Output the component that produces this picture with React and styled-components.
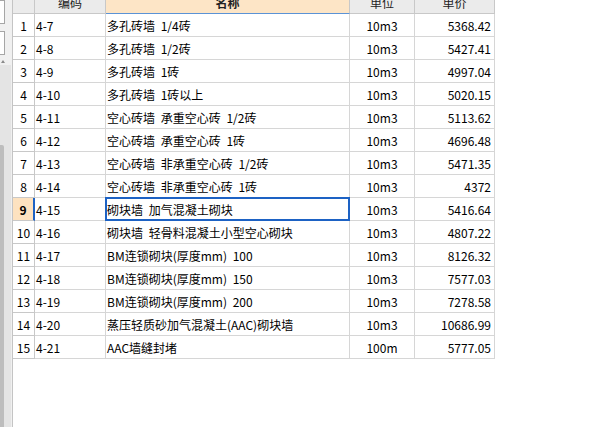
import React from "react";
import styled, { createGlobalStyle } from "styled-components";

const Global = createGlobalStyle`
  html, body { margin: 0; padding: 0; background: #fff; overflow: hidden; }
  body { font-family: "Noto Sans CJK SC", "Liberation Sans", sans-serif; font-size: 12px; color: #000; }
`;

const Page = styled.div`
  display: flex;
  width: 612px;
  height: 427px;
  overflow: hidden;
`;

const LeftPanel = styled.div`
  width: 12px;
  flex: none;
  background: #f0f0f0;
  display: flex;
  flex-direction: column;
  overflow: hidden;
`;

const StubBox = styled.div`
  width: 5px;
  height: 24px;
  background: #fff;
  border: 1px solid #a6a6a6;
  border-left: none;
  margin-top: ${(p) => p.$top}px;
  box-sizing: border-box;
`;

const Arrow = styled.div`
  margin: 5px 0 0 1px;
  width: 0;
  height: 0;
  border-left: 2px solid transparent;
  border-right: 2px solid transparent;
  border-bottom: 3px solid #8a8a8a;
`;

const Track = styled.div`
  flex: 1;
  margin-top: 2px;
  width: 11px;
  background: #e4e4e4;
  display: flex;
  flex-direction: column;
`;

const Thumb = styled.div`
  margin-top: 80px;
  width: 4px;
  flex: 1;
  background: #bdbdbd;
  border-radius: 0 2px 0 0;
`;

const GridArea = styled.div`
  flex: 1;
  border-left: 1px solid #c4c4c4;
  background: #fff;
  overflow: hidden;
`;

const Grid = styled.div`
  display: grid;
  grid-template-columns: 22px 71px 244px 65px 80px;
  grid-auto-rows: 23px;
  width: max-content;
  margin-top: -9px;
`;

const HeadCell = styled.div`
  box-sizing: border-box;
  background: ${(p) => (p.$active ? "#fde5c6" : "#ebebeb")};
  border-right: 1px solid #c8c8c8;
  border-bottom: 1px solid ${(p) => (p.$active ? "#5b93d6" : "#c8c8c8")};
  display: flex;
  align-items: center;
  justify-content: center;
  font-weight: ${(p) => (p.$active ? 700 : 400)};
  color: #222;
`;

const Cell = styled.div`
  box-sizing: border-box;
  position: relative;
  border-right: 1px solid #d6d6d6;
  border-bottom: 1px solid #d6d6d6;
  display: flex;
  align-items: center;
  white-space: pre;
  word-spacing: 3px;
  justify-content: ${(p) =>
    p.$align === "center" ? "center" : p.$align === "right" ? "flex-end" : "flex-start"};
  padding: ${(p) => (p.$align === "right" ? "0 3px 0 0" : p.$align === "center" ? "0" : "0 0 0 1px")};
`;

const NumCell = styled(Cell)`
  border-right: ${(p) => (p.$sel ? "2px solid #1d62c4" : "1px solid #c8c8c8")};
  border-bottom-color: #c8c8c8;
  background: ${(p) => (p.$sel ? "#fde2c0" : "#fff")};
  font-weight: ${(p) => (p.$sel ? 700 : 400)};
  justify-content: center;
  padding: 0;
`;

const Focus = styled.div`
  position: absolute;
  left: -1px;
  top: -1px;
  right: -1px;
  bottom: -1px;
  border: 2px solid #1d62c4;
  pointer-events: none;
`;

const rows = [
  ["4-7", "多孔砖墙 1/4砖", "10m3", "5368.42"],
  ["4-8", "多孔砖墙 1/2砖", "10m3", "5427.41"],
  ["4-9", "多孔砖墙 1砖", "10m3", "4997.04"],
  ["4-10", "多孔砖墙 1砖以上", "10m3", "5020.15"],
  ["4-11", "空心砖墙 承重空心砖 1/2砖", "10m3", "5113.62"],
  ["4-12", "空心砖墙 承重空心砖 1砖", "10m3", "4696.48"],
  ["4-13", "空心砖墙 非承重空心砖 1/2砖", "10m3", "5471.35"],
  ["4-14", "空心砖墙 非承重空心砖 1砖", "10m3", "4372"],
  ["4-15", "砌块墙 加气混凝土砌块", "10m3", "5416.64"],
  ["4-16", "砌块墙 轻骨料混凝土小型空心砌块", "10m3", "4807.22"],
  ["4-17", "BM连锁砌块(厚度mm) 100", "10m3", "8126.32"],
  ["4-18", "BM连锁砌块(厚度mm) 150", "10m3", "7577.03"],
  ["4-19", "BM连锁砌块(厚度mm) 200", "10m3", "7278.58"],
  ["4-20", "蒸压轻质砂加气混凝土(AAC)砌块墙", "10m3", "10686.99"],
  ["4-21", "AAC墙缝封堵", "100m", "5777.05"],
];

export default function App() {
  return (
    <>
      <Global />
      <Page>
        <LeftPanel>
          <StubBox $top={0} />
          <StubBox $top={7} />
          <Arrow />
          <Track>
            <Thumb />
          </Track>
        </LeftPanel>
        <GridArea>
          <Grid>
            <HeadCell />
            <HeadCell>编码</HeadCell>
            <HeadCell $active>名称</HeadCell>
            <HeadCell>单位</HeadCell>
            <HeadCell>单价</HeadCell>
            {rows.map((r, i) => {
              const sel = i === 8;
              return (
                <React.Fragment key={i}>
                  <NumCell $sel={sel}>{i + 1}</NumCell>
                  <Cell>{r[0]}</Cell>
                  <Cell>
                    {r[1]}
                    {sel && <Focus />}
                  </Cell>
                  <Cell $align="center">{r[2]}</Cell>
                  <Cell $align="right">{r[3]}</Cell>
                </React.Fragment>
              );
            })}
          </Grid>
        </GridArea>
      </Page>
    </>
  );
}
